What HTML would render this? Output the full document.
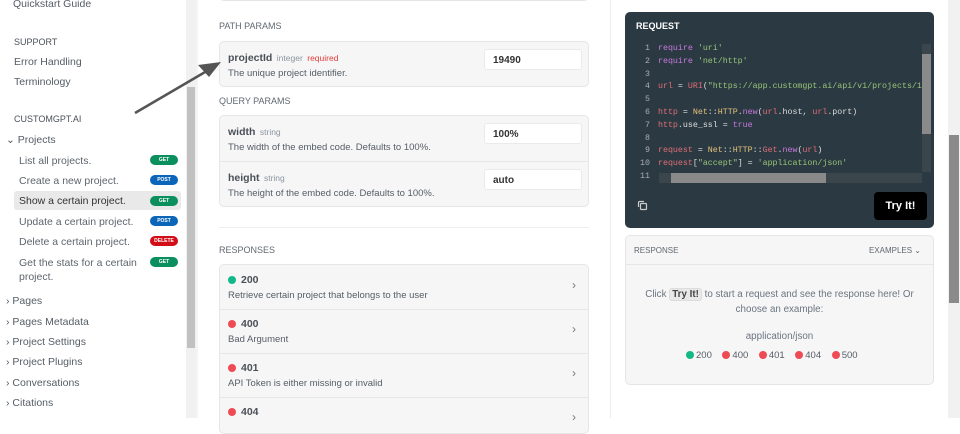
<!DOCTYPE html>
<html><head><meta charset="utf-8"><style>
*{box-sizing:border-box;margin:0;padding:0}
body{width:960px;height:418px;overflow:hidden;background:#fff;font-family:"Liberation Sans",sans-serif;position:relative;color:#4a5058}
.abs{position:absolute}
.sb{font-size:10.5px;color:#555d66}
.sec{font-size:9px;color:#4a5058;text-transform:uppercase}
.item{position:absolute;left:19px;font-size:10.5px;color:#5e656d}
.badge{position:absolute;left:150px;width:28px;height:10px;border-radius:5px;color:#fff;font-size:5px;font-weight:bold;text-align:center;line-height:10px}
.g{background:#0c8f5f}.b{background:#0b65b8}.r{background:#d10d18}
.lbl{position:absolute;left:219px;font-size:9px;color:#606870}
.box{position:absolute;left:219px;width:370px;background:#f6f6f6;border:1px solid #e6e6e6;border-radius:5px}
.pn{font-size:10.5px;font-weight:bold;color:#4a5058}
.pt{font-size:8.5px;color:#8a95a0}
.pd{font-size:9.5px;color:#555d66}
.inp{position:absolute;left:264px;width:98px;height:21px;background:#fff;border:1px solid #eaeaea;border-radius:3px;font-size:10px;font-weight:bold;color:#333;padding:5px 8px}
.dot{display:inline-block;width:8px;height:8px;border-radius:50%;margin-right:5px;vertical-align:-1px}
.code{font-family:"Liberation Mono",monospace;font-size:8.3px;line-height:12.8px}
</style></head><body>
<div class="abs sb" style="left:13px;top:-2px">Quickstart Guide</div>
<div class="abs sec" style="left:14px;top:37px">Support</div>
<div class="abs sb" style="left:14px;top:56px">Error Handling</div>
<div class="abs sb" style="left:14px;top:76px">Terminology</div>
<div class="abs sec" style="left:14px;top:114px">CustomGPT.AI</div>
<div class="abs sb" style="left:6px;top:134px">⌄ Projects</div>
<div class="abs" style="left:14px;top:191px;width:167px;height:19px;background:#e9e9e9;border-radius:3px"></div>
<div class="item" style="top:155px">List all projects.</div><div class="badge g" style="top:155px">GET</div>
<div class="item" style="top:175px">Create a new project.</div><div class="badge b" style="top:175px">POST</div>
<div class="item" style="top:195px;color:#333">Show a certain project.</div><div class="badge g" style="top:196px">GET</div>
<div class="item" style="top:216px">Update a certain project.</div><div class="badge b" style="top:216px">POST</div>
<div class="item" style="top:236px">Delete a certain project.</div><div class="badge r" style="top:236px">DELETE</div>
<div class="item" style="top:256px;line-height:14px">Get the stats for a certain<br>project.</div><div class="badge g" style="top:257px">GET</div>
<div class="abs sb" style="left:6px;top:295px">› Pages</div>
<div class="abs sb" style="left:6px;top:316px">› Pages Metadata</div>
<div class="abs sb" style="left:6px;top:336px">› Project Settings</div>
<div class="abs sb" style="left:6px;top:356px">› Project Plugins</div>
<div class="abs sb" style="left:6px;top:377px">› Conversations</div>
<div class="abs sb" style="left:6px;top:397px">› Citations</div>
<div class="abs" style="left:186px;top:0;width:10px;height:418px;background:#f1f1f1"></div>
<div class="abs" style="left:187px;top:87px;width:8px;height:261px;background:#c1c1c1"></div>
<div class="abs" style="left:196px;top:0;width:2px;height:418px;background:#f4f4f4"></div>
<div class="abs" style="left:219px;top:-5px;width:370px;height:6px;border:1px solid #e6e6e6;border-top:none;border-radius:0 0 5px 5px"></div>
<div class="lbl" style="top:21px">PATH PARAMS</div>
<div class="box" style="top:41px;height:46px"><div style="position:absolute;left:8px;top:6px"><span class="pn">projectId</span> <span class="pt">integer</span> <span class="pt" style="color:#e23b3b">required</span></div><div class="pd" style="position:absolute;left:8px;top:26px">The unique project identifier.</div><div class="inp" style="top:7px">19490</div></div>
<div class="lbl" style="top:96px">QUERY PARAMS</div>
<div class="box" style="top:115px;height:92px"><div style="position:absolute;left:8px;top:6px"><span class="pn">width</span> <span class="pt">string</span></div><div class="pd" style="position:absolute;left:8px;top:26px">The width of the embed code. Defaults to 100%.</div><div class="inp" style="top:7px">100%</div>
<div style="position:absolute;left:0;right:0;top:45px;border-top:1px solid #e6e6e6"></div>
<div style="position:absolute;left:8px;top:52px"><span class="pn">height</span> <span class="pt">string</span></div><div class="pd" style="position:absolute;left:8px;top:72px">The height of the embed code. Defaults to 100%.</div><div class="inp" style="top:53px">auto</div></div>
<div class="abs" style="left:219px;top:227px;width:370px;border-top:1px solid #eeeeee"></div>
<div class="lbl" style="top:245px">RESPONSES</div>
<div class="box" style="top:264px;height:170px">
<div style="position:absolute;left:8px;top:9px" class="pn"><span class="dot" style="background:#12b886"></span>200</div><div class="pd" style="position:absolute;left:8px;top:25px">Retrieve certain project that belongs to the user</div><div style="position:absolute;right:12px;top:13px;color:#777;font-size:12px">›</div>
<div style="position:absolute;left:0;right:0;top:44px;border-top:1px solid #e6e6e6"></div>
<div style="position:absolute;left:8px;top:53px" class="pn"><span class="dot" style="background:#ef4b55"></span>400</div><div class="pd" style="position:absolute;left:8px;top:69px">Bad Argument</div><div style="position:absolute;right:12px;top:57px;color:#777;font-size:12px">›</div>
<div style="position:absolute;left:0;right:0;top:88px;border-top:1px solid #e6e6e6"></div>
<div style="position:absolute;left:8px;top:97px" class="pn"><span class="dot" style="background:#ef4b55"></span>401</div><div class="pd" style="position:absolute;left:8px;top:113px">API Token is either missing or invalid</div><div style="position:absolute;right:12px;top:101px;color:#777;font-size:12px">›</div>
<div style="position:absolute;left:0;right:0;top:132px;border-top:1px solid #e6e6e6"></div>
<div style="position:absolute;left:8px;top:141px" class="pn"><span class="dot" style="background:#ef4b55"></span>404</div><div style="position:absolute;right:12px;top:145px;color:#777;font-size:12px">›</div>
</div>
<div class="abs" style="left:610px;top:0;width:1px;height:418px;background:#ececec"></div>
<div class="abs" style="left:625px;top:12px;width:309px;height:216px;background:#2b3a42;border-radius:5px;overflow:hidden">
<div style="position:absolute;left:11px;top:9px;color:#fff;font-size:9px;font-weight:bold">REQUEST</div>
<div class="code" style="position:absolute;left:0;top:31px;width:25px;text-align:right;color:#aab">1<br>2<br>3<br>4<br>5<br>6<br>7<br>8<br>9<br>10<br>11</div>
<div class="code" style="position:absolute;left:33px;top:31px;width:264px;overflow:hidden;white-space:pre;color:#ddd"><span style="color:#c678dd">require</span> <span style="color:#98c379">'uri'</span>
<span style="color:#c678dd">require</span> <span style="color:#98c379">'net/http'</span>

<span style="color:#e06c75">url</span> = <span style="color:#e06c75">URI</span>(<span style="color:#98c379">"https://app.customgpt.ai/api/v1/projects/19490</span>

<span style="color:#e06c75">http</span> = <span style="color:#e5c07b">Net</span>::<span style="color:#e5c07b">HTTP</span>.<span style="color:#c678dd">new</span>(<span style="color:#e06c75">url</span>.host, <span style="color:#e06c75">url</span>.port)
<span style="color:#e06c75">http</span>.use_ssl = <span style="color:#c678dd">true</span>

<span style="color:#e06c75">request</span> = <span style="color:#e5c07b">Net</span>::<span style="color:#e5c07b">HTTP</span>::<span style="color:#e06c75">Get</span>.<span style="color:#c678dd">new</span>(<span style="color:#e06c75">url</span>)
<span style="color:#e06c75">request</span>[<span style="color:#98c379">"accept"</span>] = <span style="color:#98c379">'application/json'</span></div>
<div style="position:absolute;left:297px;top:32px;width:9px;height:128px;background:#3a464c"><div style="margin-top:10px;height:80px;background:#8a8a8a"></div></div>
<div style="position:absolute;left:34px;top:161px;width:263px;height:10px;background:#3a464c"><div style="margin-left:12px;width:155px;height:10px;background:#8a8a8a"></div></div>
<svg style="position:absolute;left:12px;top:188px" width="11" height="11" viewBox="0 0 11 11" fill="none" stroke="#ccc" stroke-width="1.2"><rect x="3.5" y="3.5" width="6" height="6" rx="1"/><path d="M1.5 7V2.5a1 1 0 0 1 1-1H7"/></svg>
<div style="position:absolute;left:249px;top:180px;width:53px;height:28px;background:#000;border-radius:4px;color:#fff;font-weight:bold;font-size:11px;text-align:center;line-height:28px">Try It!</div>
</div>
<div class="abs" style="left:625px;top:235px;width:309px;height:150px;background:#f6f6f6;border:1px solid #e6e6e6;border-radius:5px">
<div style="position:absolute;left:8px;top:10px;font-size:8px;color:#606870">RESPONSE</div>
<div style="position:absolute;right:12px;top:10px;font-size:8px;color:#606870">EXAMPLES ⌄</div>
<div style="position:absolute;left:0;right:0;top:28px;border-top:1px solid #e6e6e6"></div>
<div style="position:absolute;left:0;right:0;top:51px;text-align:center;font-size:9.8px;color:#6b7580;line-height:15px">Click <span style="background:#e8e8e8;border:1px solid #ddd;border-radius:3px;padding:0 2px;font-weight:bold;color:#444">Try It!</span> to start a request and see the response here! Or<br>choose an example:</div>
<div style="position:absolute;left:0;right:0;top:95px;text-align:center;font-size:9.8px;color:#6b7580">application/json</div>
<div style="position:absolute;left:60px;top:114px;font-size:9.5px;color:#555d66;white-space:nowrap"><span class="dot" style="background:#12b886;margin-right:2px"></span>200 &nbsp;&nbsp;&nbsp;<span class="dot" style="background:#ef4b55;margin-right:2px"></span>400 &nbsp;&nbsp;&nbsp;<span class="dot" style="background:#ef4b55;margin-right:2px"></span>401 &nbsp;&nbsp;&nbsp;<span class="dot" style="background:#ef4b55;margin-right:2px"></span>404 &nbsp;&nbsp;&nbsp;<span class="dot" style="background:#ef4b55;margin-right:2px"></span>500</div>
</div>
<div class="abs" style="left:948px;top:0;width:12px;height:418px;background:#f1f1f1"></div>
<div class="abs" style="left:949px;top:135px;width:10px;height:168px;background:#8a8a8a"></div>
<svg class="abs" style="left:0;top:0" width="960" height="418"><line x1="135" y1="113" x2="212" y2="68" stroke="#555" stroke-width="2.5"/><polygon points="221,62 198,65 209,77" fill="#555"/></svg>
</body></html>
